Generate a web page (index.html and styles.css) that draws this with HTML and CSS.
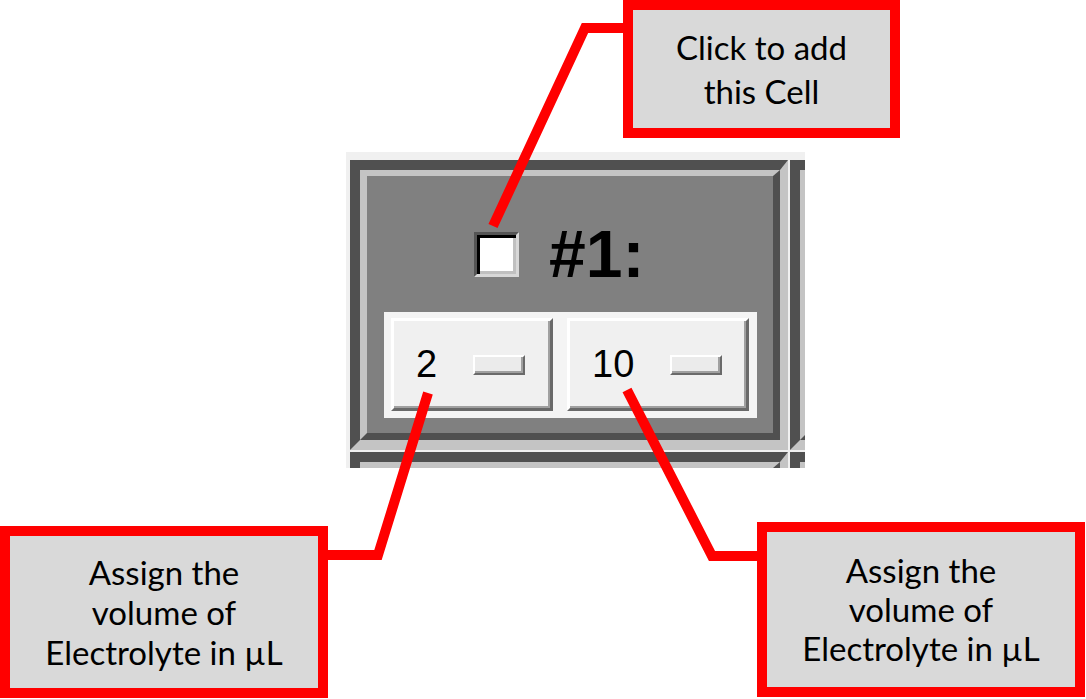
FILE: index.html
```html
<!DOCTYPE html>
<html lang="en">
<head>
  <meta charset="UTF-8" />
  <title>Cell selection help</title>
  <link rel="stylesheet" href="styles.css">
</head>
<body>
  <div class="figure">
    <!-- screenshot of the cell grid -->
    <div class="shot">
      <div class="cell">
        <div class="cell-inner">
          <div class="cell-head">
            <span class="check"></span>
            <span class="cell-title">#1:</span>
          </div>
          <div class="spin-frame">
            <div class="spin spin-a">
              <span class="spin-value">2</span>
              <span class="spin-bar"></span>
            </div>
            <div class="spin spin-b">
              <span class="spin-value">10</span>
              <span class="spin-bar"></span>
            </div>
          </div>
        </div>
      </div>
      <div class="cell"><div class="cell-inner"></div></div>
      <div class="cell"><div class="cell-inner"></div></div>
      <div class="cell"><div class="cell-inner"></div></div>
    </div>

    <div class="callout callout-top">
      <p>Click to add<br>this Cell</p>
    </div>
    <div class="callout callout-left">
      <p>Assign the<br>volume of<br>Electrolyte in µL</p>
    </div>
    <div class="callout callout-right">
      <p>Assign the<br>volume of<br>Electrolyte in µL</p>
    </div>

    <svg class="leaders" width="1086" height="699" viewBox="0 0 1086 699">
      <polyline points="623,28 585,28 493,226" />
      <polyline points="328,555 378,555 428,393" />
      <polyline points="757,556 712,556 627,390" />
    </svg>
  </div>
</body>
</html>
```

FILE: styles.css
```css
body {
  margin: 0;
  background: #fff;
  font-family: Lato, "Liberation Sans", sans-serif;
}

.figure {
  position: relative;
  width: 1086px;
  height: 699px;
  overflow: hidden;
}

/* screenshot crop */
.shot {
  position: absolute;
  left: 346px;
  top: 152px;
  width: 459px;
  height: 316px;
  overflow: hidden;
  background: #f0f0f0;
  display: grid;
  grid-template-columns: 438px 438px;
  grid-template-rows: 290px 290px;
  gap: 2px;
  padding: 8px 0 0 4px;
  box-sizing: border-box;
}

.cell {
  border-style: solid;
  border-width: 10px 8px 10px 10px;
  border-color: #505050 #c4c4c4 #c4c4c4 #505050;
  display: flex;
}

.cell-inner {
  flex: 1;
  border-style: solid;
  border-width: 6px 7px 7px 7px;
  border-color: #c4c4c4 #505050 #505050 #c4c4c4;
  background: #808080;
  display: flex;
  flex-direction: column;
  padding: 54px 16px 15px 17px;
}

.cell-head {
  display: flex;
  align-items: center;
  height: 48px;
  padding-left: 90px;
  gap: 30px;
}

.check {
  width: 45px;
  height: 45px;
  box-sizing: border-box;
  background: #fff;
  border: 3px solid;
  border-color: #555 #d8d8d8 #d8d8d8 #555;
  box-shadow: inset 3px 3px 0 #000, inset -3px -3px 0 #c0c0c0;
}

.cell-title {
  font-family: "Liberation Sans", Arial, sans-serif;
  font-weight: bold;
  font-size: 66px;
  line-height: 48px;
  color: #000;
}

.spin-frame {
  margin-top: 34px;
  height: 106px;
  box-sizing: border-box;
  background: #f4f4f4;
  display: flex;
  gap: 14px;
  padding: 6px 8px 7px 7px;
}

.spin {
  height: 93px;
  box-sizing: border-box;
  background: #f0f0f0;
  border: 3px solid;
  border-color: #fff #696969 #696969 #fff;
  box-shadow: inset -2px -2px 0 #a0a0a0;
  display: flex;
  align-items: center;
  gap: 36px;
  padding-left: 22px;
}

.spin-a { width: 162px; }
.spin-b { width: 182px; }

.spin-value {
  font-family: "Liberation Sans", Arial, sans-serif;
  font-size: 38px;
  color: #000;
}

.spin-bar {
  width: 52px;
  height: 20px;
  box-sizing: border-box;
  background: #ebebeb;
  border: 2px solid;
  border-color: #fff #6a6a6a #6a6a6a #fff;
  box-shadow: inset -2px -2px 0 #a0a0a0;
}

/* callout boxes */
.callout {
  position: absolute;
  box-sizing: border-box;
  border: 10px solid #ff0000;
  background: #d9d9d9;
  display: flex;
  align-items: center;
  justify-content: center;
  text-align: center;
  color: #000;
}

.callout p {
  margin: 0;
}

.callout-top {
  left: 623px;
  top: 0;
  width: 277px;
  height: 138px;
  font-size: 33px;
  line-height: 44px;
}

.callout-left {
  left: 0;
  top: 526px;
  width: 328px;
  height: 172px;
  font-size: 33px;
  line-height: 40px;
}

.callout-right {
  left: 757px;
  top: 522px;
  width: 328px;
  height: 175px;
  font-size: 33px;
  line-height: 39px;
}

.leaders {
  position: absolute;
  left: 0;
  top: 0;
  pointer-events: none;
}

.leaders polyline {
  fill: none;
  stroke: #ff0000;
  stroke-width: 10;
  stroke-linejoin: miter;
}
```
